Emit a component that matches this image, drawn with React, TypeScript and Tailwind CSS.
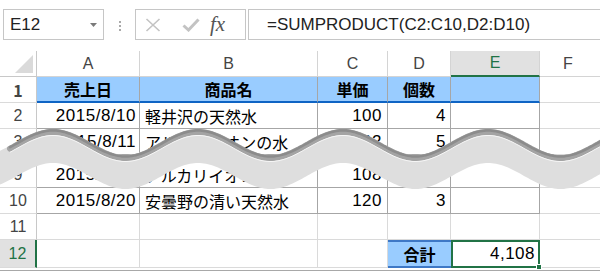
import React from "react";

const FONT = "font-['Liberation_Sans','Noto_Sans_CJK_JP',sans-serif]";
const JP = "font-['Noto_Sans_CJK_JP','Liberation_Sans',sans-serif]";
const NUM = "text-[17px] tracking-[0.5px]";

// top edge of the "torn" wave that hides rows 4-8
const waveTop = (x: number) => 142 - 13 * Math.cos((2 * Math.PI * (x - 198)) / 145);

const buildWave = () => {
  const top: string[] = [];
  const shade: string[] = [];
  const light: string[] = [];
  const bottom: string[] = [];
  for (let x = 10; x <= 612; x += 2) {
    const y = waveTop(x);
    top.push(`${x},${y.toFixed(1)}`);
    shade.push(`${x},${(y + 3).toFixed(1)}`);
    light.push(`${x},${(y + 6.5).toFixed(1)}`);
  }
  for (let x = 612; x >= 0; x -= 2) bottom.push(`${x},${(waveTop(x) + 34).toFixed(1)}`);
  const fill = `M0,${(waveTop(10) + 5).toFixed(1)} L${top.join(" L")} L${bottom.join(" L")} Z`;
  return { fill, shade: `M${shade.join(" L")}`, light: `M${light.join(" L")}` };
};

const wave = buildWave();

type CellProps = {
  w: string;
  className?: string;
  children?: React.ReactNode;
};

const Cell = ({ w, className = "", children }: CellProps) => (
  <div className={`${w} h-full shrink-0 flex items-center border-r border-b ${className}`}>{children}</div>
);

const RowNum = ({ n, active = false }: { n: string; active?: boolean }) => (
  <div
    className={`w-[37px] h-full shrink-0 flex items-center justify-center text-[16px] border-b border-[#dadada] ${
      active
        ? "bg-[#e1e1e1] text-[#217346] border-r-2 border-r-[#217346]"
        : "bg-white text-[#444] border-r border-r-[#c8c8c8]"
    }`}
  >
    {n}
  </div>
);

const T = "border-[#a6a6a6]"; // table cell borders
const G = "border-[#dadada]"; // plain grid lines

const DataRow = ({ n, a, b, c, d }: { n: string; a: string; b: string; c: string; d: string }) => (
  <div className="flex h-[26px]">
    <RowNum n={n} />
    <Cell w="w-[103px]" className={`${T} ${NUM} justify-end pr-[3px]`}>{a}</Cell>
    <Cell w="w-[178px]" className={`${T} pl-[5px] ${JP}`}>{b}</Cell>
    <Cell w="w-[70px]" className={`${T} ${NUM} justify-end pr-[5px]`}>{c}</Cell>
    <Cell w="w-[63px]" className={`${T} ${NUM} justify-end pr-[4px]`}>{d}</Cell>
    <Cell w="w-[89px]" className={T} />
    <div className={`flex-1 h-full border-b ${G}`} />
  </div>
);

export default function App() {
  return (
    <div className={`relative w-[600px] h-[273px] overflow-hidden bg-white text-black ${FONT}`}>
      {/* formula bar */}
      <div className="flex items-start h-[51px] pt-[9px]">
        <div className="ml-[3px] w-[101px] h-[31px] border border-[#c6c6c6] flex items-center justify-between pl-[6px] pr-[6px] text-[17px] text-[#222]">
          <span>E12</span>
          <svg width="7" height="4" viewBox="0 0 7 4">
            <path d="M0 0 L7 0 L3.5 4 Z" fill="#7a7a7a" />
          </svg>
        </div>
        <div className="ml-[15px] mt-[12px] flex flex-col gap-[2px]">
          <div className="w-[2px] h-[2px] bg-[#a9a9a9]" />
          <div className="w-[2px] h-[2px] bg-[#a9a9a9]" />
          <div className="w-[2px] h-[2px] bg-[#a9a9a9]" />
        </div>
        <div className="ml-[14px] w-[111px] h-[31px] border border-[#c6c6c6] flex items-center">
          <svg className="ml-[9px]" width="16" height="14" viewBox="0 0 16 14">
            <path d="M1.5 1 L14.5 13 M14.5 1 L1.5 13" stroke="#c3c3c3" strokeWidth="1.6" fill="none" />
          </svg>
          <svg className="ml-[21px]" width="18" height="14" viewBox="0 0 18 14">
            <path d="M1.5 7.5 L6.5 12 L16.5 1.5" stroke="#c3c3c3" strokeWidth="3" fill="none" />
          </svg>
          <span className="ml-[10px] font-['Liberation_Serif',serif] italic text-[21px] leading-none text-[#555]">
            fx
          </span>
        </div>
        <div className="ml-[2px] flex-1 h-[31px] border border-r-0 border-[#c6c6c6] flex items-center pl-[18px] text-[17px] text-[#222]">
          =SUMPRODUCT(C2:C10,D2:D10)
        </div>
      </div>

      {/* column headers */}
      <div className="flex h-[26px] text-[16px] text-[#444]">
        <div className="w-[37px] h-full shrink-0 border-r border-b border-[#c8c8c8] flex items-end justify-end pr-[3px] pb-[3px]">
          <svg width="18" height="18" viewBox="0 0 18 18">
            <path d="M18 0 L18 18 L0 18 Z" fill="#dadada" />
          </svg>
        </div>
        <div className="w-[103px] h-full shrink-0 border-r border-b border-[#d4d4d4] flex items-center justify-center">A</div>
        <div className="w-[178px] h-full shrink-0 border-r border-b border-[#d4d4d4] flex items-center justify-center">B</div>
        <div className="w-[70px] h-full shrink-0 border-r border-b border-[#d4d4d4] flex items-center justify-center">C</div>
        <div className="w-[63px] h-full shrink-0 border-r border-b border-[#d4d4d4] flex items-center justify-center">D</div>
        <div className="w-[89px] h-full shrink-0 border-r border-[#d4d4d4] border-b-2 border-b-[#217346] bg-[#e1e1e1] text-[#217346] flex items-center justify-center">
          E
        </div>
        <div className="flex-1 h-full border-b border-[#d4d4d4] flex items-center justify-center pr-[4px]">F</div>
      </div>

      {/* body */}
      <div className="text-[16px]">
        <div className={`flex h-[26px] font-bold ${JP}`}>
          <RowNum n="1" />
          <Cell w="w-[103px]" className="border-[#a6a6a6] border-b-2 border-b-[#0e64c4] bg-[#99ccff] justify-center">売上日</Cell>
          <Cell w="w-[178px]" className="border-[#a6a6a6] border-b-2 border-b-[#0e64c4] bg-[#99ccff] justify-center">商品名</Cell>
          <Cell w="w-[70px]" className="border-[#a6a6a6] border-b-2 border-b-[#0e64c4] bg-[#99ccff] justify-center">単価</Cell>
          <Cell w="w-[63px]" className="border-[#a6a6a6] border-b-2 border-b-[#0e64c4] bg-[#99ccff] justify-center">個数</Cell>
          <Cell w="w-[89px]" className="border-[#a6a6a6] border-b-2 border-b-[#0e64c4] bg-[#99ccff]" />
          <div className={`flex-1 h-full border-b ${G}`} />
        </div>
        <DataRow n="2" a="2015/8/10" b="軽井沢の天然水" c="100" d="4" />
        <DataRow n="3" a="2015/8/11" b="アルカリイオンの水" c="92" d="5" />
        <div className="h-[7px]" />
        <DataRow n="9" a="2015/8/19" b="アルカリイオンの水" c="108" d="6" />
        <DataRow n="10" a="2015/8/20" b="安曇野の清い天然水" c="120" d="3" />

        <div className="flex h-[26px]">
          <RowNum n="11" />
          <Cell w="w-[103px]" className={G} />
          <Cell w="w-[178px]" className={G} />
          <Cell w="w-[70px]" className={G} />
          <Cell w="w-[63px]" className={G} />
          <Cell w="w-[89px]" className={G} />
          <div className={`flex-1 h-full border-b ${G}`} />
        </div>

        <div className="flex h-[28px]">
          <RowNum n="12" active />
          <Cell w="w-[103px]" className={G} />
          <Cell w="w-[178px]" className={G} />
          <Cell w="w-[70px]" className={G} />
          <div className={`w-[63px] h-full shrink-0 flex items-center justify-center bg-[#99ccff] border-t-2 border-b-2 border-[#3e78c6] font-bold ${JP}`}>
            合計
          </div>
          <div className={`relative w-[89px] h-full shrink-0 flex items-center justify-end pr-[3px] border-2 border-[#217346] ${NUM}`}>
            4,108
            <div className="absolute -right-[4px] -bottom-[4px] w-[6px] h-[6px] bg-[#217346] border border-white" />
          </div>
          <div className={`flex-1 h-full border-b ${G}`} />
        </div>
        <div className="mt-[2px] h-px bg-[#a8a8a8]" />
      </div>

      {/* wave that hides rows 4-8 */}
      <svg className="absolute left-0 top-0 pointer-events-none" width="600" height="273" viewBox="0 0 600 273">
        <path d={wave.fill} fill="#dedede" />
        <path d={wave.shade} stroke="#a4a4a4" strokeWidth="6" fill="none" strokeLinecap="round" />
        <path d={wave.shade} stroke="#8c8c8c" strokeWidth="2.5" fill="none" strokeLinecap="round" transform="translate(0,-1.5)" />
        <path d={wave.light} stroke="#f6f6f6" strokeWidth="1" fill="none" />
      </svg>
    </div>
  );
}
